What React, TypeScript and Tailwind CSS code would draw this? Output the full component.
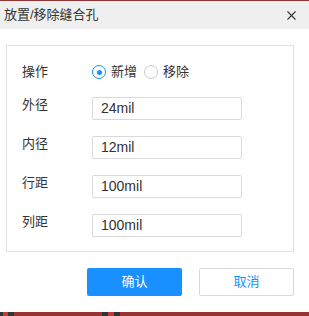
import { X } from "lucide-react";

const fields = [
  { label: "外径", value: "24mil" },
  { label: "内径", value: "12mil" },
  { label: "行距", value: "100mil" },
  { label: "列距", value: "100mil" },
];

function Radio({ checked, label }: { checked?: boolean; label: string }) {
  return (
    <label className="flex items-center gap-[5px]">
      <span
        className={`flex h-[14px] w-[14px] items-center justify-center rounded-full border ${
          checked ? "border-[#1890ff]" : "border-[#c8c8c8]"
        }`}
      >
        {checked && <span className="h-[5px] w-[5px] rounded-full bg-[#1890ff]" />}
      </span>
      <span>{label}</span>
    </label>
  );
}

export default function App() {
  return (
    <div
      className="flex h-[316px] w-[309px] flex-col bg-white text-[13px] text-[#333]"
      style={{ fontFamily: '"Liberation Sans", "Noto Sans CJK SC", sans-serif' }}
    >
      <div className="h-px bg-[#8e3434]" />
      <div className="flex h-[28px] items-center justify-between bg-[#efefef] pl-[4px] pr-[10px]">
        <span className="text-[13px] text-[#333]">放置/移除缝合孔</span>
        <X className="h-[15px] w-[15px] text-[#333]" strokeWidth={1.75} />
      </div>

      <div className="flex-1 px-[6px] pt-[16px]">
        <div className="h-[207px] w-[288px] border border-[#e2e2e2] px-[15px] pt-[17px]">
          <div className="flex h-[18px] items-center">
            <span className="w-[70px]">操作</span>
            <div className="flex items-center gap-[7px]">
              <Radio checked label="新增" />
              <Radio label="移除" />
            </div>
          </div>
          {fields.map((f) => (
            <div key={f.label} className="mt-[16px] flex items-start">
              <span className="w-[70px] leading-[16px]">{f.label}</span>
              <div className="flex h-[23px] w-[150px] items-center rounded-[2px] border border-[#d9d9d9] px-[8px] text-[14px]">
                {f.value}
              </div>
            </div>
          ))}
        </div>

        <div className="mt-[16px] flex justify-end gap-[17px] pr-[9px]">
          <button className="h-[28px] w-[95px] rounded-[2px] bg-[#1890ff] text-[13px] text-white">
            确认
          </button>
          <button className="h-[28px] w-[95px] rounded-[2px] border border-[#d9d9d9] bg-white text-[13px] text-[#1890ff]">
            取消
          </button>
        </div>
      </div>

      <div className="flex h-[4px]">
        <div className="w-[3px] bg-[#333]" />
        <div className="w-[5px] bg-[#c03a3a]" />
        <div className="w-[6px] bg-[#333]" />
        <div className="w-[88px] bg-[#9a3232]" />
        <div className="w-[6px] bg-[#333]" />
        <div className="w-[6px] bg-[#c03a3a]" />
        <div className="w-[6px] bg-[#333]" />
        <div className="flex-1 bg-[#9a3232]" />
      </div>
    </div>
  );
}
